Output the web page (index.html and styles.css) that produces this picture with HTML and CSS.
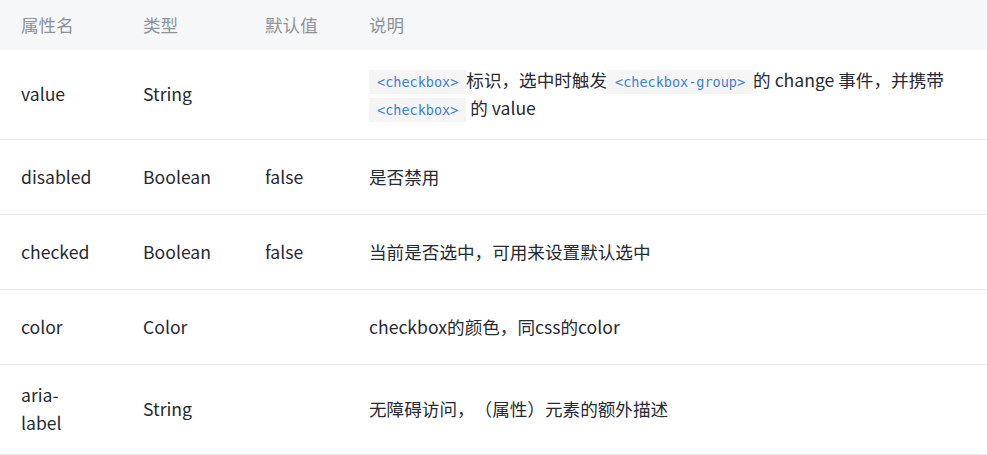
FILE: index.html
```html
<!DOCTYPE html>
<html lang="zh-CN">
<head>
<meta charset="utf-8">
<link rel="stylesheet" href="styles.css">
</head>
<body>
<table class="props">
  <colgroup>
    <col class="c-name">
    <col class="c-type">
    <col class="c-def">
    <col class="c-desc">
  </colgroup>
  <thead>
    <tr><th>属性名</th><th>类型</th><th>默认值</th><th>说明</th></tr>
  </thead>
  <tbody>
    <tr>
      <td>value</td><td>String</td><td></td>
      <td><code>&lt;checkbox&gt;</code>标识，选中时触发<code>&lt;checkbox-group&gt;</code>的 change 事件，并携带 <code>&lt;checkbox&gt;</code> 的 value</td>
    </tr>
    <tr><td>disabled</td><td>Boolean</td><td>false</td><td>是否禁用</td></tr>
    <tr><td>checked</td><td>Boolean</td><td>false</td><td>当前是否选中，可用来设置默认选中</td></tr>
    <tr><td>color</td><td>Color</td><td></td><td>checkbox的颜色，同css的color</td></tr>
    <tr><td>aria-label</td><td>String</td><td></td><td>无障碍访问，（属性）元素的额外描述</td></tr>
  </tbody>
</table>
</body>
</html>
```
FILE: styles.css
```css
html, body {
  margin: 0;
  padding: 0;
  background: #fff;
}
body {
  font-family: "Noto Sans CJK SC", "Noto Sans", sans-serif;
  font-size: 17.6px;
  color: #262a33;
  text-spacing-trim: space-all;
}
.props {
  width: 100%;
  border-collapse: collapse;
  table-layout: fixed;
}
.c-name { width: 122px; }
.c-type { width: 122px; }
.c-def { width: 104px; }
.props th {
  background: #f6f7f8;
  color: #8f9399;
  font-weight: normal;
  text-align: left;
  height: 50px;
  padding: 0 21px;
  line-height: 28px;
}
.props td {
  height: 75px;
  padding: 16px 21px 17px;
  line-height: 28px;
  border-bottom: 1px solid #e8e9eb;
  vertical-align: middle;
  box-sizing: border-box;
  word-break: break-word;
}
.props td:first-child { padding-right: 27px; }
.props td:nth-child(4) { padding-right: 10px; }
code {
  font-family: "DejaVu Sans Mono", monospace;
  font-size: 13.5px;
  line-height: 1;
  color: #3f7fd0;
  background: #f5f5f5;
  padding: 4px 8px;
}
```
